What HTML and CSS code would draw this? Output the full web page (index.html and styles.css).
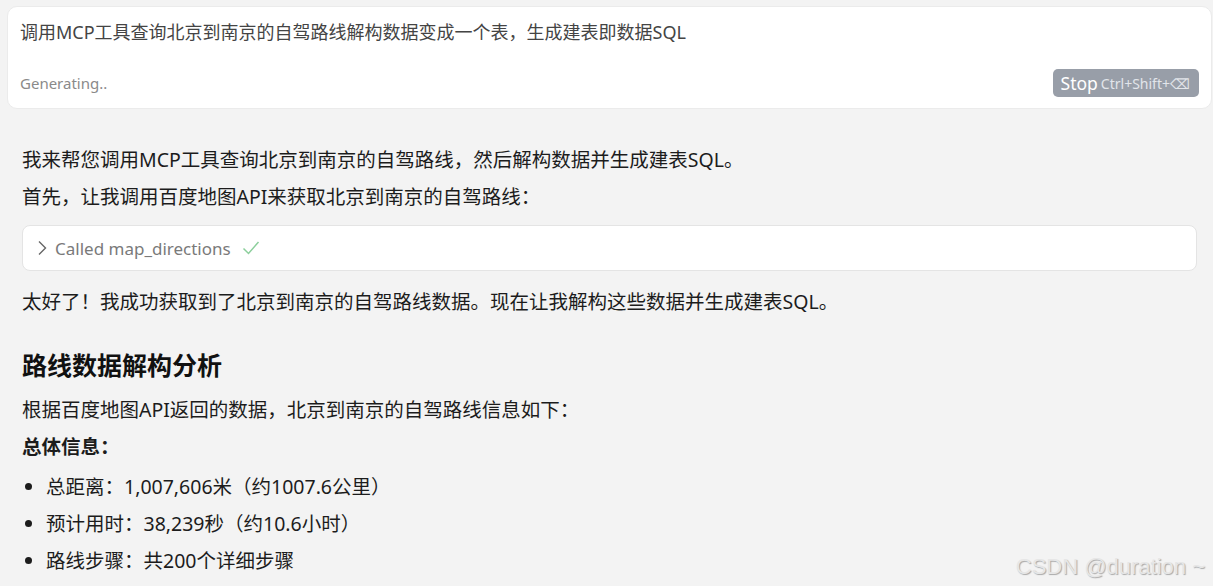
FILE: index.html
```html
<!DOCTYPE html>
<html lang="zh-CN">
<head>
  <meta charset="UTF-8">
  <title>MCP 自驾路线</title>
  <link rel="stylesheet" href="styles.css">
</head>
<body>
  <div class="prompt">
    <div class="prompt-text">调用MCP工具查询北京到南京的自驾路线解构数据变成一个表，生成建表即数据SQL</div>
    <div class="prompt-bar">
      <span class="status">Generating..</span>
      <button class="stop">Stop <span class="keys">Ctrl+Shift+⌫</span></button>
    </div>
  </div>

  <div class="reply">
    <p>我来帮您调用MCP工具查询北京到南京的自驾路线，然后解构数据并生成建表SQL。</p>
    <p>首先，让我调用百度地图API来获取北京到南京的自驾路线：</p>

    <div class="tool">
      <svg class="chevron" width="10" height="16" viewBox="0 0 10 16">
        <polyline points="2,1.5 8.5,8 2,14.5" fill="none" stroke="#666" stroke-width="1.4"/>
      </svg>
      <span>Called map_directions</span>
      <svg class="check" width="18" height="16" viewBox="0 0 18 16">
        <polyline points="1.5,8.5 6.5,13.5 16.5,2" fill="none" stroke="#8ccf9c" stroke-width="1.5"/>
      </svg>
    </div>

    <p>太好了！我成功获取到了北京到南京的自驾路线数据。现在让我解构这些数据并生成建表SQL。</p>

    <h2>路线数据解构分析</h2>
    <p>根据百度地图API返回的数据，北京到南京的自驾路线信息如下：</p>
    <p class="label">总体信息：</p>
    <ul>
      <li>总距离：1,007,606米（约1007.6公里）</li>
      <li>预计用时：38,239秒（约10.6小时）</li>
      <li>路线步骤：共200个详细步骤</li>
    </ul>
  </div>

  <div class="watermark">CSDN @duration ~</div>
</body>
</html>
```

FILE: styles.css
```css
* {
  box-sizing: border-box;
}

body {
  margin: 0;
  background: #f3f3f3;
  color: #1c1c1c;
  font-family: "Noto Sans", "Noto Sans CJK SC", sans-serif;
  height: 586px;
  overflow: hidden;
  position: relative;
}

.prompt {
  margin: 6px 1px 0 7px;
  height: 103px;
  background: #ffffff;
  border: 1px solid #ebebeb;
  border-radius: 10px;
  padding: 12px 12px 0 12px;
  display: flex;
  flex-direction: column;
  justify-content: space-between;
}

.prompt-text {
  font-size: 18px;
  line-height: 26px;
  color: #444;
}

.prompt-bar {
  display: flex;
  justify-content: space-between;
  align-items: center;
  height: 40px;
  padding-bottom: 10px;
}

.status {
  font-size: 15px;
  color: #8a8a8a;
}

.stop {
  height: 28px;
  padding: 0 9px 0 8px;
  border: none;
  border-radius: 5px;
  background: #989ea8;
  color: #ffffff;
  font-family: "Noto Sans", sans-serif;
  font-size: 17.5px;
  display: flex;
  align-items: center;
  gap: 3px;
}

.keys {
  font-size: 14px;
  color: #e2e5ea;
}

.reply {
  padding: 37px 16px 0 22px;
  font-size: 19.5px;
}

p {
  margin: 0 0 10px;
  line-height: 27px;
}

.tool {
  margin: 15px 0 17px;
  height: 46px;
  background: #ffffff;
  border: 1px solid #e4e4e4;
  border-radius: 8px;
  display: flex;
  align-items: center;
  padding-left: 14px;
  gap: 8px;
  color: #7a7a7a;
  font-size: 17px;
}

.check {
  margin-left: 3px;
}

h2 {
  margin: 33px 0 14px;
  font-size: 25px;
  line-height: 34px;
  font-weight: 700;
  color: #111;
}

.label {
  font-weight: 700;
  margin-bottom: 13px;
}

ul {
  margin: 0;
  padding-left: 24px;
}

li {
  line-height: 27px;
  margin-bottom: 10px;
}

.watermark {
  position: absolute;
  right: 8px;
  bottom: 6px;
  font-family: "Liberation Sans", Arial, sans-serif;
  font-size: 22px;
  color: #e6e6e6;
  text-shadow: 1px 1px 1px #a8a8a8;
}
```
